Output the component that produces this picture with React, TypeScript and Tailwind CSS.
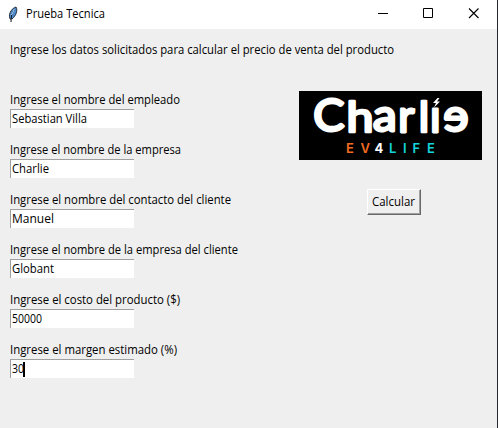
import React from "react";

type Field = { label: string; width: number; value: string; valueWidth: number; caret?: boolean };

const fields: Field[] = [
  { label: "Ingrese el nombre del empleado", width: 170, value: "Sebastian Villa", valueWidth: 75 },
  { label: "Ingrese el nombre de la empresa", width: 171, value: "Charlie", valueWidth: 37 },
  { label: "Ingrese el nombre del contacto del cliente", width: 221, value: "Manuel", valueWidth: 42 },
  { label: "Ingrese el nombre de la empresa del cliente", width: 228, value: "Globant", valueWidth: 42 },
  { label: "Ingrese el costo del producto ($)", width: 170, value: "50000", valueWidth: 30 },
  { label: "Ingrese el margen estimado (%)", width: 167, value: "30", valueWidth: 12, caret: true },
];

function Label({ text, width }: { text: string; width: number }) {
  return (
    <svg className="block overflow-visible" width={width} height="16">
      <text x="0" y="12" textLength={width} lengthAdjust="spacingAndGlyphs" className="fill-black text-[12px]">
        {text}
      </text>
    </svg>
  );
}

function Logo() {
  return (
    <svg className="mt-px block overflow-visible bg-black" width="183" height="69" viewBox="0 0 183 69" role="img" aria-label="Charlie EV4LIFE">
      <g fill="#fff" stroke="#fff" strokeWidth="2.8" strokeLinejoin="round" fontFamily="Lato, sans-serif" fontWeight="400" fontSize="44">
        <text transform="translate(14.200 40.300) scale(1.060 1)">C</text>
        <text transform="translate(47.500 40.500) scale(1.100 .97)">h</text>
        <text transform="translate(74 40.300) scale(1.080 1)">a</text>
        <text transform="translate(99.300 40.500)">r</text>
        <text transform="translate(119.700 40.500) scale(1 .97)">l</text>
        <text transform="translate(131 40.500)">ı</text>
        <text transform="translate(169.500 40.300) scale(-1.080 1)">e</text>
      </g>
      <path d="M138.500 7l-4.500 5h3l-2 4.500 6-6h-3l2.500-3.500z" fill="#fff" />
      <g fontFamily="Inter, sans-serif" fontWeight="600" fontSize="13">
        <text x="47" y="62" fill="#f26b21">E</text>
        <text x="61.500" y="62" fill="#f26b21">V</text>
        <text x="75.500" y="62" fill="#fff" fontWeight="700">4</text>
        <text x="90" y="62" fill="#14d3dc">L</text>
        <text x="104" y="62" fill="#14d3dc">I</text>
        <text x="113.500" y="62" fill="#14d3dc">F</text>
        <text x="128" y="62" fill="#14d3dc">E</text>
      </g>
    </svg>
  );
}

export default function App() {
  return (
    <div className="flex h-[428px] w-[498px] flex-col overflow-hidden border-r border-[#24282e] bg-[#efefef] font-['Open_Sans','Noto_Sans',sans-serif] text-black">
      <header className="flex h-[29px] shrink-0 items-center bg-white pl-[7px]">
        <svg className="mr-[7px]" width="12" height="18" viewBox="0 0 12 18">
          <path d="M3.500 13.500C1 10 3 3 9 1c2 3 0 9-4 12" fill="#4c8bd0" stroke="#17202b" strokeWidth=".9" />
          <path d="M8 3C5 6 4 10 4 16" fill="none" stroke="#111" strokeWidth="1" />
          <path d="M7.500 3L4.500 9" stroke="#b7dcff" strokeWidth="1" />
        </svg>
        <div className="pb-px"><Label text="Prueba Tecnica" width={79} /></div>
        <svg className="ml-auto" width="119" height="29" viewBox="0 0 119 29" fill="none" stroke="#000">
          <path d="M0 13.500h10M45.500 8.500h9v9h-9z" />
          <path d="M91 8.500l9.500 9.500M100.500 8.500L91 18" strokeWidth="1.100" />
        </svg>
      </header>
      <main className="flex flex-col pl-[10px] pt-[13px]">
        <Label text="Ingrese los datos solicitados para calcular el precio de venta del producto" width={384} />
        <div className="mt-[32px] flex justify-between pr-[15px]">
          <div className="flex flex-col gap-[12px]">
            {fields.map((f) => (
              <label key={f.label} className="flex h-[38px] flex-col">
                <span className="mb-px mt-[2px] h-4"><Label text={f.label} width={f.width} /></span>
                <span className="flex h-[19px] w-[124px] items-center border-l border-t border-[#a0a0a0] bg-white pl-px">
                  <Label text={f.value} width={f.valueWidth} />
                  {f.caret && <span className="-ml-px h-[15px] w-[2px] bg-black" />}
                </span>
              </label>
            ))}
          </div>
          <div className="flex flex-col items-start">
            <Logo />
            <button className="ml-[68px] mt-[29px] flex h-[26px] w-[54px] items-center border border-b-[#696969] border-l-white border-r-[#696969] border-t-white pl-[4px] shadow-[inset_-1px_-1px_#a0a0a0]">
              <Label text="Calcular" width={43} />
            </button>
          </div>
        </div>
      </main>
    </div>
  );
}
